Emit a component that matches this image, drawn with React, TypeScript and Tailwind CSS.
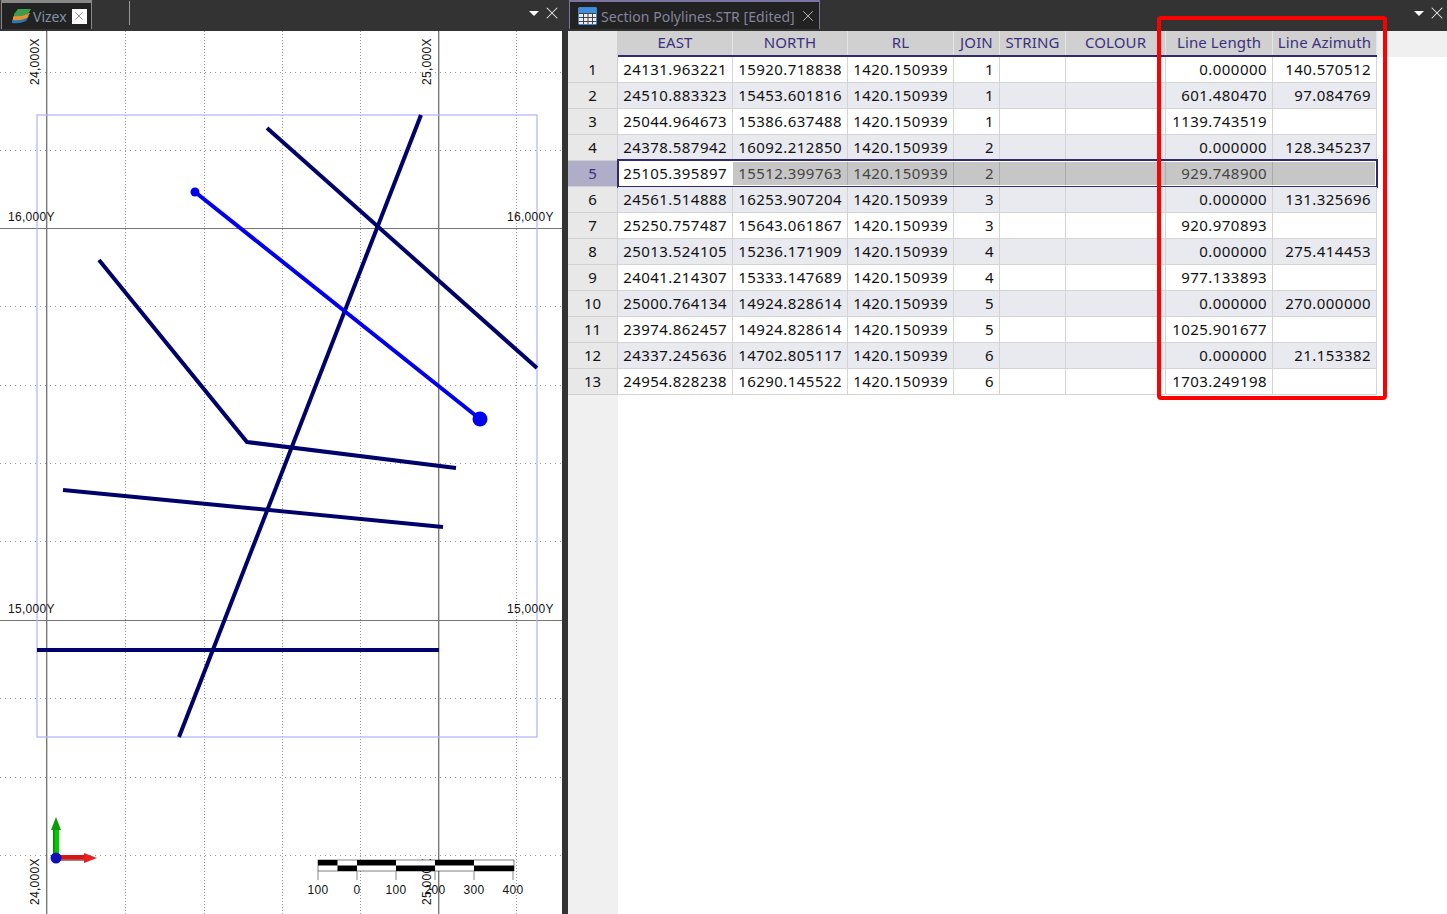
import { X } from "lucide-react";

const columns = ["EAST", "NORTH", "RL", "JOIN", "STRING", "COLOUR", "Line Length", "Line Azimuth"];

const rows = [
  ["24131.963221", "15920.718838", "1420.150939", "1", "", "", "0.000000", "140.570512"],
  ["24510.883323", "15453.601816", "1420.150939", "1", "", "", "601.480470", "97.084769"],
  ["25044.964673", "15386.637488", "1420.150939", "1", "", "", "1139.743519", ""],
  ["24378.587942", "16092.212850", "1420.150939", "2", "", "", "0.000000", "128.345237"],
  ["25105.395897", "15512.399763", "1420.150939", "2", "", "", "929.748900", ""],
  ["24561.514888", "16253.907204", "1420.150939", "3", "", "", "0.000000", "131.325696"],
  ["25250.757487", "15643.061867", "1420.150939", "3", "", "", "920.970893", ""],
  ["25013.524105", "15236.171909", "1420.150939", "4", "", "", "0.000000", "275.414453"],
  ["24041.214307", "15333.147689", "1420.150939", "4", "", "", "977.133893", ""],
  ["25000.764134", "14924.828614", "1420.150939", "5", "", "", "0.000000", "270.000000"],
  ["23974.862457", "14924.828614", "1420.150939", "5", "", "", "1025.901677", ""],
  ["24337.245636", "14702.805117", "1420.150939", "6", "", "", "0.000000", "21.153382"],
  ["24954.828238", "16290.145522", "1420.150939", "6", "", "", "1703.249198", ""],
];

const gridCols = "grid grid-cols-[115px_115px_106px_46px_66px_100px_107px_104px]";
const dottedX = [125, 204, 282, 360, 516];
const dottedY = [72, 150, 306, 385, 463, 541, 698, 777, 855];

function PanelMenu() {
  return (
    <div className="flex items-center gap-[3px]">
      <div className="h-0 w-0 border-x-[5px] border-t-[5px] border-x-transparent border-t-white" />
      <X size={20} strokeWidth={1.25} className="text-[#e8e8e8]" />
    </div>
  );
}

function LayersIcon() {
  return (
    <svg width="20" height="16" viewBox="0 0 20 16" className="shrink-0">
      <path d="M1 12 L5 8 H18 L15 13 Q9 16 1 15 Z" fill="#2f74b5" />
      <path d="M2 9 L6 5 H19 L16 10 Q9 13 2 12 Z" fill="#e9912e" />
      <path d="M3 6 L7 1 H20 L17 6 Q10 9 3 8 Z" fill="#3f9a49" />
    </svg>
  );
}

function TableIcon() {
  return (
    <svg width="19" height="18" viewBox="0 0 19 18" className="shrink-0">
      <rect x="0.5" y="0.5" width="18" height="17" rx="1" fill="#e8eef5" stroke="#3d86cc" />
      <rect x="1" y="1" width="17" height="5" fill="#3d8fdc" />
      <path d="M1 6.5 H18 M1 10.5 H18 M1 14.5 H18 M5.5 6 V17 M10 6 V17 M14.5 6 V17" stroke="#444" strokeWidth="1" />
    </svg>
  );
}

function AxisTriad() {
  return (
    <g>
      <rect x="53" y="829" width="6" height="28" fill="#05c805" />
      <rect x="53" y="829" width="1.5" height="28" fill="#068a06" />
      <path d="M56 817 L61 830 H51 Z" fill="#0a9a0a" />
      <rect x="56" y="855" width="28" height="6" fill="#d81414" />
      <rect x="56" y="859.5" width="28" height="1.5" fill="#a88080" />
      <path d="M97 858 L84 853 V863 Z" fill="#e82020" />
      <circle cx="56" cy="858" r="5.5" fill="#1010b8" />
    </g>
  );
}

function ScaleBar() {
  const ticks = [
    { x: 318, label: "100" },
    { x: 357, label: "0" },
    { x: 396, label: "100" },
    { x: 435, label: "200" },
    { x: 474, label: "300" },
    { x: 513, label: "400" },
  ];
  return (
    <g>
      <rect x="318" y="860" width="196" height="11" fill="#fff" stroke="#000" strokeWidth="0.5" />
      <rect x="318" y="860" width="19.5" height="5.5" fill="#000" />
      <rect x="337.5" y="865.5" width="19.5" height="5.5" fill="#000" />
      <rect x="357" y="860" width="39" height="5.5" fill="#000" />
      <rect x="396" y="865.5" width="39" height="5.5" fill="#000" />
      <rect x="435" y="860" width="39" height="5.5" fill="#000" />
      <rect x="474" y="865.5" width="40" height="5.5" fill="#000" />
      {ticks.map((t) => (
        <g key={t.x}>
          <line x1={t.x} y1="871" x2={t.x} y2="880" stroke="#888" />
          <text x={t.x} y="894" textAnchor="middle" className="fill-[#111] text-[12px]">
            {t.label}
          </text>
        </g>
      ))}
    </g>
  );
}

function SectionCanvas() {
  return (
    <svg width="562" height="883" viewBox="0 31 562 883" className="block font-['Liberation_Sans',sans-serif] tracking-[0.3px]">
      <rect x="0" y="31" width="562" height="883" fill="#fff" />
      {dottedX.map((x) => (
        <line key={x} x1={x + 0.5} y1="31" x2={x + 0.5} y2="914" stroke="#999" strokeDasharray="1 2" />
      ))}
      {dottedY.map((y) => (
        <line key={y} x1="0" y1={y + 0.5} x2="562" y2={y + 0.5} stroke="#999" strokeDasharray="1 4" />
      ))}
      <path d="M47.5 31 V914 M439.5 31 V914" stroke="#ccc" strokeWidth="1" />
      <path d="M46.5 31 V914 M438.5 31 V914 M0 228.5 H562 M0 620.5 H562" stroke="#777" strokeWidth="1" />
      <rect x="37" y="115" width="500" height="622" fill="none" stroke="#b4b4ff" strokeWidth="1.25" />

      <g fill="none" stroke="#00006a" strokeWidth="4">
        <path d="M267 128 L537 368" />
        <path d="M421 115 L179 737" />
        <path d="M99 260 L247 442 L456 468" />
        <path d="M63 490 L443 527" />
        <path d="M37 650 L439 650" />
      </g>
      <path d="M195 192 L480 419" fill="none" stroke="#0000ee" strokeWidth="4" />
      <circle cx="195" cy="192" r="4.5" fill="#0000ee" />
      <circle cx="480" cy="419" r="7.5" fill="#0000ee" />

      <g className="fill-[#111] text-[12px]">
        <text x="8" y="221">16,000Y</text>
        <text x="507" y="221">16,000Y</text>
        <text x="8" y="613">15,000Y</text>
        <text x="507" y="613">15,000Y</text>
        <text transform="translate(39 85) rotate(-90)">24,000X</text>
        <text transform="translate(431 85) rotate(-90)">25,000X</text>
        <text transform="translate(39 905) rotate(-90)">24,000X</text>
        <text transform="translate(431 905) rotate(-90)">25,000X</text>
      </g>

      <AxisTriad />
      <ScaleBar />
    </svg>
  );
}

function SheetHeader() {
  return (
    <div className="flex h-[26px] shrink-0 bg-[#f0f0f0]">
      <div className="w-[50px] shrink-0 border-r border-[#d0d0d0] bg-[#e8e8e8]" />
      <div className={`${gridCols} border-b-2 border-[#322a6e] bg-[#d0d0d0]`}>
        {columns.map((col) => (
          <div key={col} className="flex items-center justify-center border-r border-[#e4e4e4] pb-px tracking-[0.12px] text-[#3b3080]">
            {col}
          </div>
        ))}
      </div>
    </div>
  );
}

function SheetRow({ index, cells }: { index: number; cells: string[] }) {
  const selected = index === 5;
  const shaded = index % 2 === 0;
  return (
    <div className="flex h-[26px]">
      <div
        className={`flex w-[50px] shrink-0 items-center justify-center border-r border-b border-[#d0d0d0] pb-px ${
          selected ? "bg-[#b0adc8] text-[#3b3080]" : "bg-[#e8e8e8] text-[#111]"
        }`}
      >
        {index}
      </div>
      <div className={`${gridCols} relative ${selected ? "bg-[#c6c6c6]" : shaded ? "bg-[#e9e9f0]" : "bg-white"}`}>
        {cells.map((cell, i) => (
          <div
            key={i}
            className={`flex items-center justify-end border-r border-b pr-[5px] pb-px tracking-[0.45px] ${
              selected
                ? i === 0
                  ? "border-white bg-white text-[#111]"
                  : "border-[#aaa] text-[#444]"
                : "border-[#d4d4d4] text-[#111]"
            }`}
          >
            {cell}
          </div>
        ))}
        {selected && (
          <div className="absolute -inset-x-px -top-[2px] -bottom-px border-2 border-[#322a6e] shadow-[inset_0_0_0_1px_#fff]" />
        )}
      </div>
    </div>
  );
}

export default function App() {
  return (
    <div className="relative flex h-[914px] w-[1447px] overflow-hidden bg-[#333] font-['Noto_Sans',sans-serif] text-[15px]">
      {/* left: vizex view */}
      <div className="flex w-[562px] shrink-0 flex-col">
        <div className="flex h-[31px] shrink-0 items-start justify-between bg-[#333] pl-px">
          <div className="flex items-start">
            <div className="flex h-[29px] w-[91px] items-center border-x border-t-[3px] border-[#888] border-b-0 bg-[#222] pl-[9px] text-[14px] text-[#7f93a8]">
              <LayersIcon />
              <span className="ml-[2px]">Vizex</span>
              <div className="ml-[5px] flex h-[15px] w-[15px] items-center justify-center bg-white">
                <X size={14} strokeWidth={1.5} className="text-[#8a8a8a]" />
              </div>
            </div>
            <div className="mt-px ml-[37px] h-[24px] w-px bg-[#999]" />
          </div>
          <div className="mt-[3px]">
            <PanelMenu />
          </div>
        </div>
        <SectionCanvas />
      </div>

      <div className="w-[6px] shrink-0 bg-[#333]" />

      {/* right: spreadsheet */}
      <div className="flex min-w-0 flex-1 flex-col">
        <div className="flex h-[31px] shrink-0 items-start justify-between bg-[#333] pl-px">
          <div className="flex h-[29px] w-[251px] items-center border-x border-t-[2px] border-[#7a74a0] border-b-0 bg-[#222] pl-[8px] text-[14px] tracking-[0.05px] text-[#84849c]">
            <TableIcon />
            <span className="ml-[4px] whitespace-nowrap pt-px">Section Polylines.STR [Edited]</span>
            <X size={18} strokeWidth={1.25} className="ml-[4px] shrink-0 text-[#c0c0c0]" />
          </div>
          <div className="mt-[3px]">
            <PanelMenu />
          </div>
        </div>
        <SheetHeader />
        <div className="flex min-h-0 flex-1 flex-col bg-white">
          {rows.map((cells, i) => (
            <SheetRow key={i} index={i + 1} cells={cells} />
          ))}
          <div className="w-[50px] flex-1 bg-[#f0f0f0]" />
        </div>
      </div>

      {/* annotation drawn over the screenshot */}
      <div className="absolute top-[16px] left-[1157px] h-[384px] w-[230px] rounded-[4px] border-4 border-[#ff0000]" />
    </div>
  );
}
